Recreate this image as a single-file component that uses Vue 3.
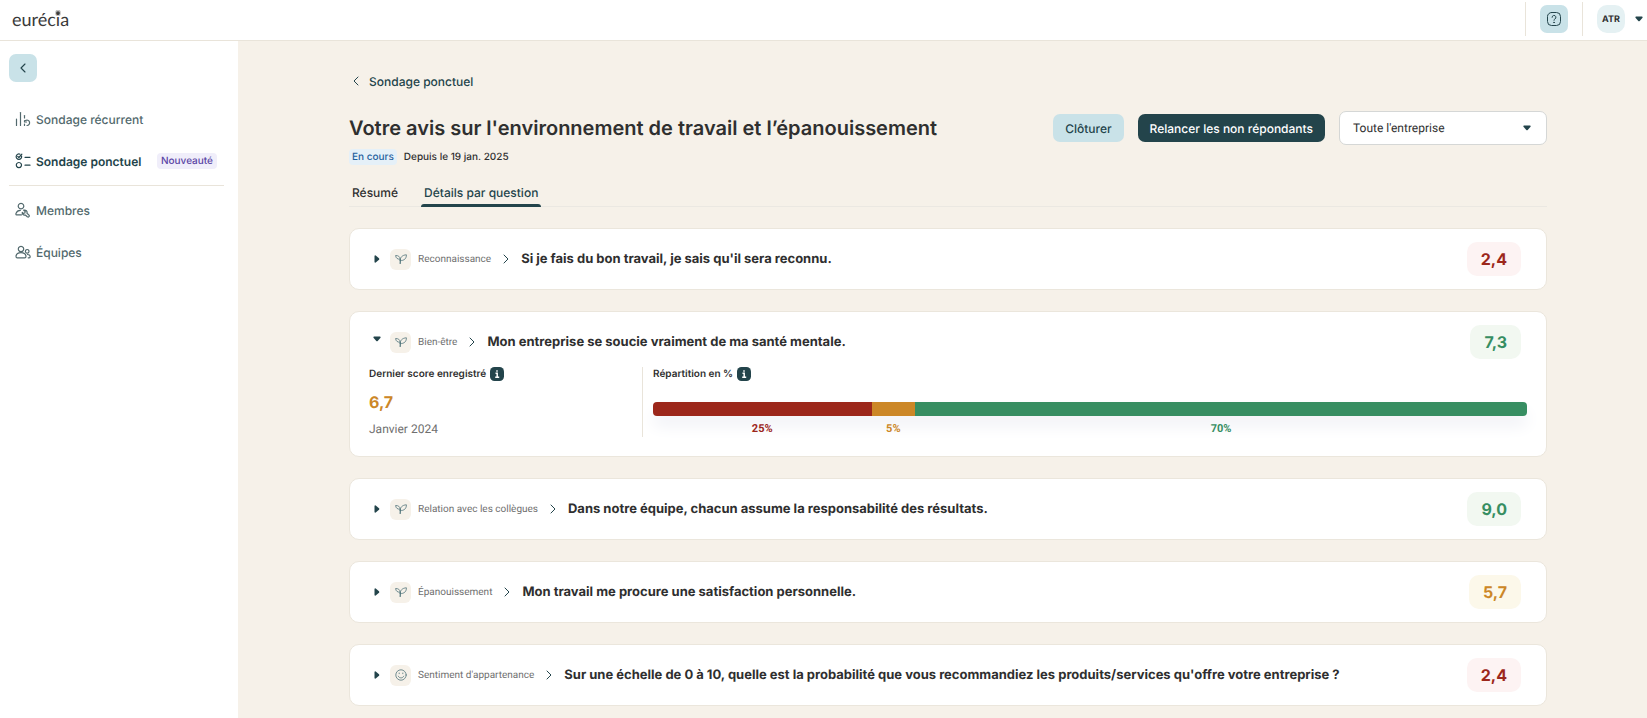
<template>
  <div class="app">
    <header class="topbar">
      <a href="#" class="topbar__logo">eurécia
        <svg class="topbar__star" viewBox="0 0 10 10" aria-hidden="true">
          <path d="M5 0.5v9M0.8 3.4l8.4 3.2M9.2 3.4L0.8 6.6M2.4 9l5.2-8M7.6 9L2.4 1" />
        </svg>
      </a>
      <div class="topbar__actions">
        <div class="topbar__cell">
          <button type="button" class="square-btn" aria-label="Aide">
            <svg class="icon-16" viewBox="0 0 16 16" fill="none" stroke="currentColor" stroke-width="1" stroke-linecap="round">
              <rect x="1.5" y="1.5" width="13" height="13" rx="4" />
              <path d="M6.1 6.3a1.9 1.9 0 1 1 2.8 1.7c-.6.3-.9.7-.9 1.3" />
              <circle cx="8" cy="11.4" r=".35" fill="currentColor" />
            </svg>
          </button>
        </div>
        <button type="button" class="topbar__cell topbar__user">
          <span class="topbar__avatar">ATR</span>
          <svg class="caret" viewBox="0 0 8 6"><path d="M1 .5h6q1 .3.5 1.2L4.7 5q-.7.7-1.4 0L.5 1.7Q0 .8 1 .5z" /></svg>
        </button>
      </div>
    </header>

    <div class="layout">
      <aside class="sidebar">
        <button type="button" class="square-btn" aria-label="Réduire le menu">
          <svg class="icon-16" viewBox="0 0 16 16" fill="none" stroke="currentColor" stroke-width="1.1" stroke-linecap="round" stroke-linejoin="round">
            <path d="M10 4L6 8l4 4" />
          </svg>
        </button>
        <nav class="sidebar__nav">
          <template v-for="item in menu" :key="item.id">
            <a href="#" class="sidebar__link" :class="{ 'sidebar__link--active': item.active }">
              <svg class="icon-16" viewBox="0 0 16 16" fill="none" stroke="currentColor" stroke-width="1.2" stroke-linecap="round" stroke-linejoin="round">
                <path v-for="d in item.paths" :key="d" :d="d" />
              </svg>
              <span>{{ item.label }}</span>
              <span v-if="item.badge" class="badge badge--new">{{ item.badge }}</span>
            </a>
            <hr v-if="item.separator" class="sidebar__separator">
          </template>
        </nav>
      </aside>

      <main class="content">
        <a href="#" class="back">
          <svg class="icon-14" viewBox="0 0 14 14" fill="none" stroke="currentColor" stroke-width="1" stroke-linecap="round" stroke-linejoin="round">
            <path d="M9 3L5 7l4 4" />
          </svg>
          <span>Sondage ponctuel</span>
        </a>

        <div class="heading">
          <h1 class="heading__title">Votre avis sur l'environnement de travail et l’épanouissement</h1>
          <div class="heading__actions">
            <button type="button" class="btn btn--light">Clôturer</button>
            <button type="button" class="btn btn--dark">Relancer les non répondants</button>
            <div class="select">
              <select v-model="scope" aria-label="Périmètre">
                <option>Toute l'entreprise</option>
              </select>
              <svg class="caret" viewBox="0 0 8 6"><path d="M1 .5h6q1 .3.5 1.2L4.7 5q-.7.7-1.4 0L.5 1.7Q0 .8 1 .5z" /></svg>
            </div>
          </div>
        </div>

        <div class="status">
          <span class="badge badge--running">En cours</span>
          <span>Depuis le 19 jan. 2025</span>
        </div>

        <div class="tabs" role="tablist">
          <button v-for="tab in tabs" :key="tab" type="button" role="tab" class="tabs__tab"
            :class="{ 'tabs__tab--active': tab === currentTab }" :aria-selected="tab === currentTab" @click="currentTab = tab">
            {{ tab }}
          </button>
        </div>

        <section class="questions">
          <article v-for="question in questions" :key="question.id" class="card">
            <button type="button" class="card__header" :aria-expanded="question.open" @click="question.open = !question.open">
              <span class="card__toggle" :class="{ 'card__toggle--open': question.open }">
                <svg v-if="question.open" class="caret" viewBox="0 0 8 6"><path d="M1 .5h6q1 .3.5 1.2L4.7 5q-.7.7-1.4 0L.5 1.7Q0 .8 1 .5z" /></svg>
                <svg v-else class="caret caret--right" viewBox="0 0 6 8"><path d="M.5 1v6q.3 1 1.2.5L5 4.7q.7-.7 0-1.4L1.7.5Q.8 0 .5 1z" /></svg>
              </span>
              <span class="card__icon">
                <svg v-if="question.icon === 'smile'" class="icon-12" viewBox="0 0 12 12" fill="none" stroke="currentColor" stroke-width=".8" stroke-linecap="round">
                  <circle cx="6" cy="6" r="5.2" />
                  <path d="M3.3 7.2c.5 1.100 1.500 1.700 2.700 1.700s2.200-.6 2.700-1.700M4.200 4v.7M7.800 4v.7" />
                </svg>
                <svg v-else class="icon-12" viewBox="0 0 12 12" fill="none" stroke="currentColor" stroke-width=".8" stroke-linecap="round" stroke-linejoin="round">
                  <path d="M5.2 10.500V6.200C5 3.600 3.200 2.400.6 2.500.8 5 2.400 6.500 5.200 6.200zM5.200 7.600C5 4.400 7.300 2 11.400 1.800c.1 3.600-2 6-6.200 5.800z" />
                </svg>
              </span>
              <span class="card__category">{{ question.category }}</span>
              <svg class="card__chevron" viewBox="0 0 8 10" fill="none" stroke="currentColor" stroke-width="1" stroke-linecap="round" stroke-linejoin="round">
                <path d="M2 1l4 4-4 4" />
              </svg>
              <span class="card__question">{{ question.title }}</span>
              <span class="score" :class="'score--' + question.level">{{ question.score }}</span>
            </button>

            <div v-if="question.open && question.last" class="card__detail">
              <div class="last">
                <p class="label">Dernier score enregistré
                  <svg class="info" viewBox="0 0 14 14"><rect width="14" height="14" rx="4.500" /><path d="M5.500 6.200h1.700v3.900M5.200 10.300h4M7 3.200v1.600" /></svg>
                </p>
                <p class="last__score">{{ question.last.score }}</p>
                <p class="last__date">{{ question.last.date }}</p>
              </div>
              <div class="split">
                <p class="label">Répartition en %
                  <svg class="info" viewBox="0 0 14 14"><rect width="14" height="14" rx="4.500" /><path d="M5.500 6.200h1.700v3.900M5.200 10.300h4M7 3.200v1.600" /></svg>
                </p>
                <div class="split__bar">
                  <span v-for="part in question.parts" :key="part.level" :class="'split__part--' + part.level" :style="{ width: part.value + '%' }"></span>
                </div>
                <div class="split__values">
                  <span v-for="part in question.parts" :key="part.level" :class="'split__value--' + part.level" :style="{ width: part.value + '%' }">{{ part.value }}%</span>
                </div>
              </div>
            </div>
          </article>
        </section>
      </main>
    </div>
  </div>
</template>


<script setup>
import { ref } from "vue"

const scope = ref("Toute l'entreprise")
const tabs = ['Résumé', 'Détails par question']
const currentTab = ref('Détails par question')

const menu = [
  {
    id: 'recurrent',
    label: 'Sondage récurrent',
    paths: ['M1.5 8v6.5', 'M5.5 1.5v13', 'M9.5 4.5v2.5', 'M9.5 9.5v1.5h2', 'M10.5 9.5a2.7 2.7 0 1 1 1.5 5', 'M9.5 13v1.5'],
  },
  {
    id: 'ponctuel',
    label: 'Sondage ponctuel',
    badge: 'Nouveauté',
    active: true,
    separator: true,
    paths: ['M6.5 3a2.7 2.7 0 1 1-1.5-1.8', 'M2.7 3.3l1.2 1.2 3-3.3', 'M3.9 9.5a2.6 2.6 0 1 0 .01 0z', 'M10 4.3h5', 'M10 12.2h5'],
  },
  {
    id: 'membres',
    label: 'Membres',
    paths: ['M6 1.3a2.8 2.8 0 1 0 .01 0z', 'M6.5 12.8h-5c-.7 0-.7-.7-.5-1.4.7-1.9 2.3-3 4.3-3', 'M8.7 8.2l1.5 1.4-.4 1.4-1.5.3-1-1c-.4 1.8 1.2 3.2 3 2.7l2 1.8c1.3.8 2.5-.6 1.7-1.7l-2-1.9c.5-1.9-1-3.5-3.3-3z'],
  },
  {
    id: 'equipes',
    label: 'Équipes',
    paths: ['M6 2.3a2.7 2.7 0 1 0 .01 0z', 'M1 12.2c.3-2.2 2.2-3.6 5-3.6s4.7 1.4 5 3.6c0 1-.4 1.6-1.3 1.6H2.3c-.9 0-1.3-.6-1.3-1.6z', 'M12.2 5.5a1.8 1.8 0 1 0 .01 0z', 'M12.5 10.5c1.5.1 2.7 1 2.7 2.3 0 .6-.3 1-1 1h-1'],
  },
]

const questions = ref([
  { id: 1, category: 'Reconnaissance', title: "Si je fais du bon travail, je sais qu'il sera reconnu.", score: '2,4', level: 'low', icon: 'sprout', open: false },
  {
    id: 2,
    category: 'Bien-être',
    title: 'Mon entreprise se soucie vraiment de ma santé mentale.',
    score: '7,3',
    level: 'high',
    icon: 'sprout',
    open: true,
    last: { score: '6,7', date: 'Janvier 2024' },
    parts: [
      { level: 'low', value: 25 },
      { level: 'medium', value: 5 },
      { level: 'high', value: 70 },
    ],
  },
  { id: 3, category: 'Relation avec les collègues', title: 'Dans notre équipe, chacun assume la responsabilité des résultats.', score: '9,0', level: 'high', icon: 'sprout', open: false },
  { id: 4, category: 'Épanouissement', title: 'Mon travail me procure une satisfaction personnelle.', score: '5,7', level: 'medium', icon: 'sprout', open: false },
  { id: 5, category: "Sentiment d'appartenance", title: "Sur une échelle de 0 à 10, quelle est la probabilité que vous recommandiez les produits/services qu'offre votre entreprise ?", score: '2,4', level: 'low', icon: 'smile', open: false },
])
</script>


<style>
body {
  background-color: #f6f1e9;
}
</style>

<style scoped>
.app {
  display: flex;
  flex-direction: column;
  min-height: 100vh;
  font-family: Inter, sans-serif;
  font-size: 12px;
  color: #2f2f2f;
  text-rendering: geometricPrecision;
}

.app * {
  box-sizing: border-box;
}

button,
select {
  font: inherit;
  color: inherit;
  text-rendering: inherit;
  cursor: pointer;
}

button {
  padding: 0;
  border: none;
  background: none;
}

a {
  color: inherit;
  text-decoration: none;
}

p {
  margin: 0;
}

.icon-16 {
  width: 16px;
  height: 16px;
  flex: none;
}

.icon-14 {
  width: 14px;
  height: 14px;
}

.icon-12 {
  width: 12px;
  height: 12px;
}

.caret {
  width: 8px;
  height: 6px;
  flex: none;
  fill: #23444b;
}

.caret--right {
  width: 6px;
  height: 8px;
}

.square-btn {
  display: flex;
  align-items: center;
  justify-content: center;
  width: 28px;
  height: 28px;
  border-radius: 7px;
  background-color: #c9e2e8;
  color: #23444b;
}

/* barre du haut */
.topbar {
  display: flex;
  justify-content: space-between;
  height: 41px;
  padding: 2px 4px 4px 12px;
  border-bottom: 1px solid #e9e4da;
  background-color: #fff;
}

.topbar__logo {
  position: relative;
  align-self: center;
  font-family: Lato, sans-serif;
  font-size: 18px;
  color: #3a3a3a;
}

.topbar__star {
  position: absolute;
  top: 2px;
  right: 8px;
  width: 6px;
  height: 6px;
  stroke: #3a3a3a;
  stroke-width: 1.4;
}

.topbar__actions {
  display: flex;
}

.topbar__cell {
  display: flex;
  align-items: center;
  padding: 0 14px;
  border-left: 1px solid #e9e4da;
}

.topbar__user {
  gap: 10px;
  padding-right: 0;
}

.topbar__avatar {
  display: flex;
  align-items: center;
  justify-content: center;
  width: 28px;
  height: 28px;
  border-radius: 10px;
  background-color: #e5f1f3;
  font-size: 9px;
  font-weight: 700;
}

.layout {
  display: flex;
  flex: 1;
}

/* menu */
.sidebar {
  flex: none;
  width: 238px;
  padding: 13px 14px 0 9px;
  background-color: #fff;
}

.sidebar__nav {
  padding-top: 16px;
}

.sidebar__link {
  display: flex;
  align-items: center;
  gap: 5px;
  height: 42px;
  padding: 0 7px 0 6px;
  font-weight: 500;
  color: #52696d;
}

.sidebar__link--active {
  font-weight: 600;
  color: #23444b;
}

.sidebar__separator {
  margin: 3px 0;
  border: none;
  border-top: 1px solid #e9e4da;
}

.badge {
  padding: 0 3px;
  border-radius: 4px;
  font-size: 10px;
  font-weight: 500;
  line-height: 16px;
}

.badge--new {
  margin-left: auto;
  padding: 0 4px;
  background-color: #f0eefa;
  color: #5a45a5;
}

.badge--running {
  background-color: #e5f0f8;
  color: #1f5f9e;
}

/* contenu */
.content {
  flex: 1;
  min-width: 0;
  padding: 31px 100px 12px 111px;
}

.back {
  display: inline-flex;
  align-items: center;
  gap: 6px;
  height: 18px;
  font-weight: 500;
  color: #23444b;
}

.heading {
  display: flex;
  align-items: center;
  justify-content: space-between;
  height: 34px;
  margin-top: 20px;
}

.heading__title {
  margin: 0;
  font-size: 20px;
  font-weight: 600;
}

.heading__actions {
  display: flex;
  align-items: center;
  gap: 14px;
}

.btn {
  height: 28px;
  padding: 0 12px;
  border-radius: 7px;
  font-weight: 500;
}

.btn--light {
  background-color: #c9e2e8;
  color: #23444b;
}

.btn--dark {
  background-color: #23444b;
  color: #fff;
}

.select {
  display: flex;
  align-items: center;
  position: relative;
  width: 208px;
  font-family: Roboto, sans-serif;
}

.select select {
  width: 100%;
  height: 34px;
  padding: 0 32px 0 13px;
  border: 1px solid #d5d7d6;
  border-radius: 7px;
  background-color: #fff;
  appearance: none;
}

.select .caret {
  position: absolute;
  right: 16px;
  pointer-events: none;
}

.status {
  display: flex;
  align-items: center;
  gap: 7px;
  margin-top: 4px;
  font-size: 10px;
  font-weight: 500;
  line-height: 16px;
}

.tabs {
  display: flex;
  gap: 20px;
  margin-top: 13px;
  border-bottom: 1px solid #ebe8e2;
}

.tabs__tab {
  position: relative;
  height: 28px;
  padding: 0 3px;
  font-weight: 500;
}

.tabs__tab--active {
  color: #23444b;
}

.tabs__tab--active::after {
  content: "";
  position: absolute;
  right: 0;
  bottom: -1px;
  left: 0;
  height: 3px;
  border-radius: 3px 3px 0 0;
  background-color: #23444b;
}

.questions {
  display: flex;
  flex-direction: column;
  gap: 21px;
  margin-top: 21px;
}

.card {
  border: 1px solid #ebe6dc;
  border-radius: 10px;
  background-color: #fff;
}

.card__header {
  display: flex;
  align-items: center;
  width: 100%;
  height: 60px;
  padding: 0 25px 0 20px;
  text-align: left;
}

.card__toggle {
  display: flex;
  justify-content: center;
  width: 14px;
}

.card__toggle--open {
  padding-bottom: 6px;
}

.card__icon {
  display: flex;
  align-items: center;
  justify-content: center;
  width: 21px;
  height: 21px;
  margin: 0 7px 0 6px;
  border-radius: 6px;
  background-color: #f6f1e9;
  color: #52757b;
}

.card__category {
  font-family: Roboto, sans-serif;
  font-size: 10px;
  color: #6f6f6f;
}

.card__chevron {
  width: 8px;
  height: 10px;
  margin: 0 11px;
  color: #23444b;
}

.card__question {
  font-size: 13px;
  font-weight: 700;
}

.score {
  margin-left: auto;
  padding: 0 14px;
  border-radius: 10px;
  font-size: 16px;
  font-weight: 700;
  line-height: 34px;
}

.score--low {
  background-color: #fdf3f3;
  color: #9c271b;
}

.score--medium {
  background-color: #fcf8ea;
  color: #cc8727;
}

.score--high {
  background-color: #f2f8f1;
  color: #378e62;
}

.card__detail {
  display: flex;
  padding: 0 19px 19px;
  margin-top: -5px;
}

.last {
  flex: none;
  width: 274px;
  border-right: 1px solid #e9e4da;
}

.label {
  display: flex;
  align-items: center;
  gap: 4px;
  height: 14px;
  font-size: 10px;
  font-weight: 600;
}

.info {
  width: 14px;
  height: 14px;
  fill: #23444b;
}

.info path {
  fill: none;
  stroke: #fff;
  stroke-width: 1.5;
}

.last__score {
  margin-top: 11px;
  font-size: 16px;
  font-weight: 700;
  line-height: 20px;
  color: #cc8727;
}

.last__date {
  margin-top: 9px;
  font-family: Roboto, sans-serif;
  font-size: 12px;
  line-height: 16px;
  color: #6f6f6f;
}

.split {
  flex: 1;
  padding-left: 10px;
}

.split__bar {
  display: flex;
  height: 14px;
  margin-top: 21px;
  border-radius: 4px;
  overflow: hidden;
  box-shadow: 0 10px 16px #f0f1f6;
}

.split__part--low {
  background-color: #9c271b;
}

.split__part--medium {
  background-color: #cc8727;
}

.split__part--high {
  background-color: #378e62;
}

.split__values {
  display: flex;
  position: relative;
  margin-top: 5px;
  font-family: Roboto, sans-serif;
  font-size: 11px;
  font-weight: 700;
  line-height: 16px;
  text-align: center;
}

.split__value--low {
  color: #9c271b;
}

.split__value--medium {
  color: #cc8727;
}

.split__value--high {
  color: #378e62;
}
</style>
